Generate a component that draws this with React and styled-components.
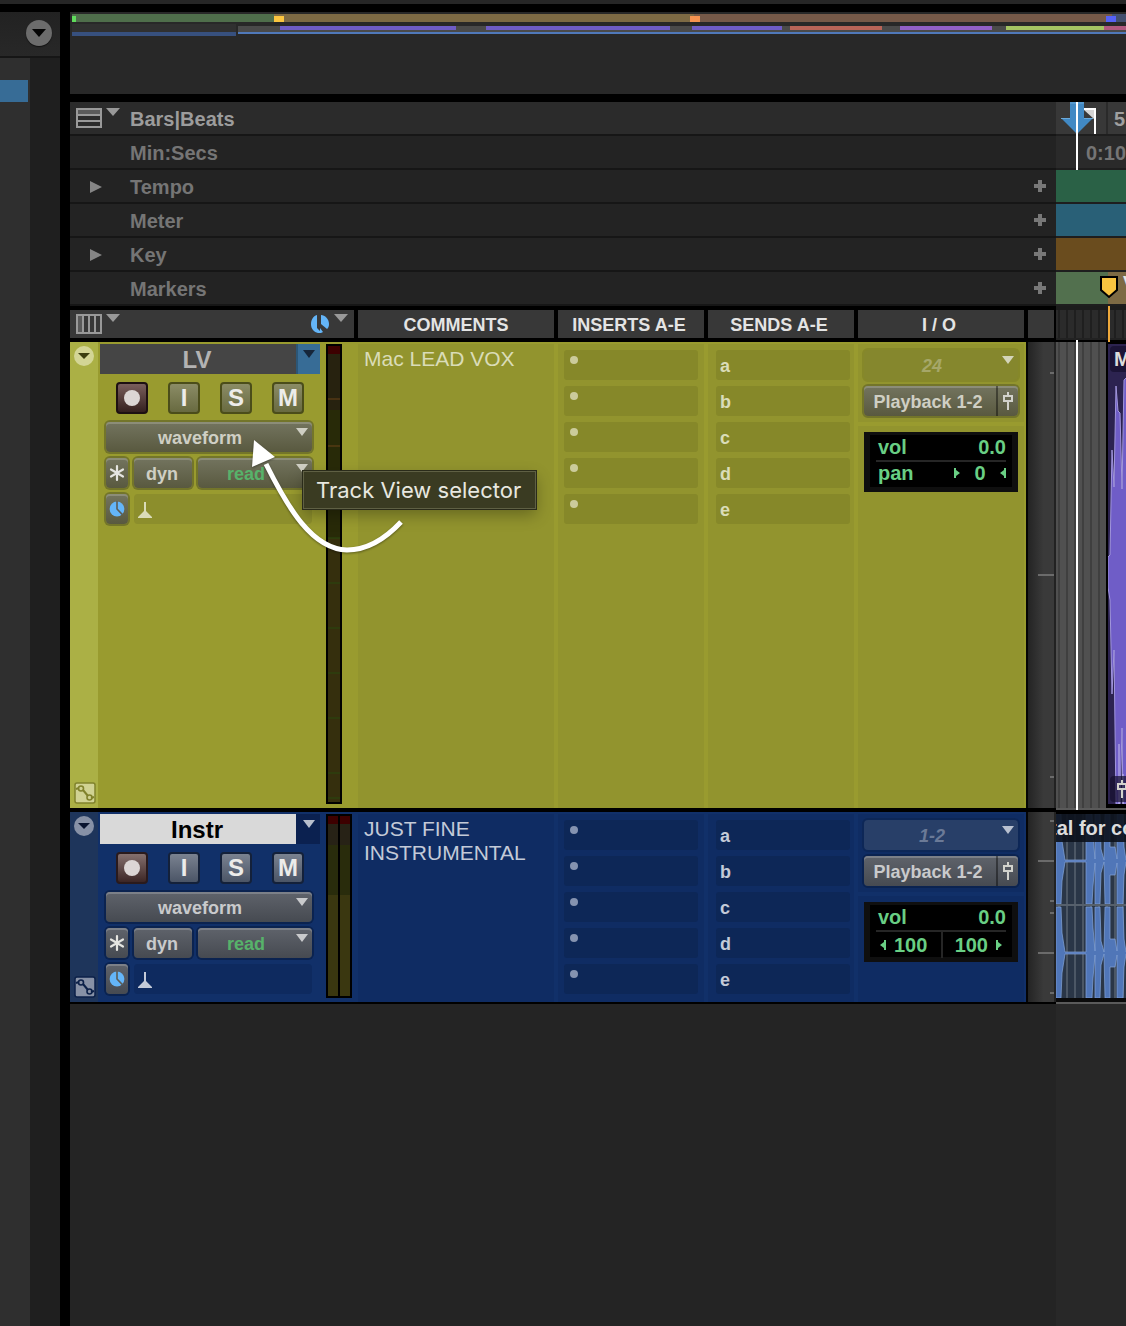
import React, { useState } from 'react'
import styled, { createGlobalStyle, ThemeProvider } from 'styled-components'

const olive = {
    base: '#999b2f', panel: '#92942e', slot: '#868829', strip: '#abb045',
    ring: '#73752a', btnTop: '#73745f', btnBottom: '#59593f', btnEdge: '#8c8d78',
    keyTop: '#8b8c66', keyBottom: '#686a40', keyEdge: '#4b4d1a', recTop: '#7a5f5c', recBottom: '#35201f', recEdge: '#1d1012',
    text: '#cfcfc4', soft: '#dadcb8', dot: '#cbcb9b',
    nameBg: '#454545', nameText: '#b3b3b3', dropBg: '#376c96', dropEdge: '#2c5676', dropArrow: '#16263a',
    fold: '#d3d595', foldArrow: '#3c3e10', inputBg: '#85872d', inputText: '#a6a769', arrow: '#d4d5ba', link: '#80822c', linkBg: '#d0d293',
}

const navy = {
    base: '#113069', panel: '#0f2c63', slot: '#0d2757', strip: '#1e355b',
    ring: '#0b2350', btnTop: '#5f636b', btnBottom: '#464a51', btnEdge: '#7c8088',
    keyTop: '#7a8290', keyBottom: '#4b5566', keyEdge: '#14213a', recTop: '#85706e', recBottom: '#3c2625', recEdge: '#2a1a1c',
    text: '#c9cacc', soft: '#c3cad8', dot: '#8593b0',
    nameBg: '#d9d9d9', nameText: '#000', dropBg: '#0b2150', dropEdge: '#0b2150', dropArrow: '#b8bfcc',
    fold: '#8791a6', foldArrow: '#0a1530', inputBg: '#283f68', inputText: '#6b7a97', arrow: '#b9c1d0', link: '#0c2149', linkBg: '#8791a6',
}

const rulers = [
    { name: 'Bars|Beats', main: true, bg: '#383838' },
    { name: 'Min:Secs', bg: '#2a2a2a' },
    { name: 'Tempo', fold: true, add: true, bg: '#2a6146' },
    { name: 'Meter', add: true, bg: '#296077' },
    { name: 'Key', fold: true, add: true, bg: '#6a4c1e' },
    { name: 'Markers', add: true, bg: '#7d6a44' },
]

const sends = ['a', 'b', 'c', 'd', 'e']

const Arrow = ({ color = '#999', w = 12, h = 8 }) => (
    <svg width={w} height={h} viewBox="0 0 12 8" preserveAspectRatio="none"><path d="M0 0H12L6 8Z" fill={color} /></svg>
)

const ClockIcon = ({ size = 16, line = '#5b5c56' }) => (
    <svg width={size} height={size} viewBox="0 0 16 16">
        <circle cx="8" cy="8" r="7.4" fill="#64b5f8" />
        <path d="M8 0V8L13.4 13.6" fill="none" stroke={line} strokeWidth="1.6" />
    </svg>
)

const SplitClock = () => (
    <svg width="20" height="20" viewBox="0 0 20 20">
        <path d="M7 1C3 2 1 6 1 10C1 15 4 18 8 19C10 19 12 19 13 18L10 14V17L7 14Z" fill="#64b5f8" />
        <path d="M11 1C15 1 19 5 19 10C19 13 18 14 17 15L11 10Z" fill="#64b5f8" />
    </svg>
)

const FaderIcon = () => (
    <svg width="12" height="20" viewBox="0 0 12 20" fill="none" stroke="#d2d2cc" strokeWidth="2">
        <path d="M6 1V5M6 10V19M2 5H10V10H2Z" />
    </svg>
)

const LinkIcon = ({ color, bg }) => (
    <svg width="22" height="22" viewBox="0 0 22 22" fill="none" stroke={color}>
        <rect x="1" y="1" width="20" height="20" rx="2" fill={bg} strokeWidth="1.5" />
        <path d="M2 7L5 6M9 8L14 14M17 16L20 15" strokeWidth="2" />
        <circle cx="7" cy="6.500" r="2.500" strokeWidth="1.600" />
        <circle cx="15.500" cy="15.500" r="2.500" strokeWidth="1.600" />
    </svg>
)

const ListIcon = () => (
    <svg width="26" height="20" viewBox="0 0 26 20">
        <path d="M1 1H25V7H1Z" fill="#5a5a5a" />
        <path d="M1 1H25V19H1ZM1 7H25M1 13H25" fill="none" stroke="#999" strokeWidth="2" />
    </svg>
)

const ColumnsIcon = () => (
    <svg width="26" height="20" viewBox="0 0 26 20">
        <path d="M1 1H7V19H1Z" fill="#5a5a5a" />
        <path d="M1 1H25V19H1ZM7 1V19M13 1V19M19 1V19" fill="none" stroke="#999" strokeWidth="2" />
    </svg>
)

const StarIcon = () => (
    <svg width="18" height="18" viewBox="0 0 18 18" stroke="#e4e4e0" strokeWidth="2.200" strokeLinecap="round">
        <path d="M9 2V16M3 5.500L15 12.500M15 5.500L3 12.500" />
    </svg>
)

const MetronomeIcon = ({ color }) => (
    <svg width="14" height="16" viewBox="0 0 14 16">
        <path d="M6 0H8V9L14 15V16H0V15L6 9Z" fill={color} />
    </svg>
)

const overviewBlocks = [
    [2, 2, 204, 8, '#4f6e4b'], [2, 4, 4, 6, '#5fdc5c'],
    [204, 2, 420, 8, '#7d6a44'], [204, 4, 10, 6, '#fbc540'],
    [624, 2, 418, 8, '#765948'], [620, 4, 10, 6, '#f69350'],
    [1042, 2, 14, 8, '#434f6f'], [1036, 4, 10, 6, '#5561f6'],
    [2, 12, 164, 8, '#303030'], [2, 20, 164, 4, '#37507e'],
    [168, 14, 888, 6, '#4a4a4a'], [168, 20, 888, 2, '#5079ba'],
    [210, 14, 176, 4, '#6e5cc6'], [416, 14, 184, 4, '#6e5cc6'], [622, 14, 90, 4, '#6e5cc6'],
    [720, 14, 92, 4, '#b86458'], [830, 14, 92, 4, '#9160c6'],
    [936, 14, 98, 4, '#a4c462'], [1034, 14, 22, 4, '#b0597e'],
]

const Overview = () => (
    <OverviewBox viewBox="0 0 1056 82" preserveAspectRatio="none">
        {overviewBlocks.map(([x, y, w, h, fill], ind) => <rect key={ind} x={x} y={y} width={w} height={h} fill={fill} />)}
    </OverviewBox>
)

const MonoMeter = () => (
    <svg width="16" height="460" viewBox="0 0 16 460">
        <rect width="16" height="460" fill="#000" />
        <rect x="2" y="2" width="12" height="8" fill="#3d0000" />
        <rect x="2" y="10" width="12" height="56" fill="#27220f" />
        <rect x="2" y="66" width="12" height="128" fill="#282a08" />
        <rect x="2" y="194" width="12" height="264" fill="#352f0d" />
        <path d="M2 55H14M2 102H14" stroke="#6b4318" />
        <path d="M2 194H14M2 239H14M2 284H14M2 329H14M2 374H14M2 429H14M2 454H14" stroke="#28480f" />
    </svg>
)

const StereoMeter = () => (
    <svg width="26" height="184" viewBox="0 0 26 184">
        <rect width="26" height="184" fill="#000" />
        {[2, 14].map(x => (
            <g key={x}>
                <rect x={x} y="2" width="10" height="8" fill="#3d0000" />
                <rect x={x} y="10" width="10" height="21" fill="#272216" />
                <rect x={x} y="31" width="10" height="50" fill="#292c0c" />
                <rect x={x} y="81" width="10" height="101" fill="#3a3710" />
            </g>
        ))}
    </svg>
)

const VoxWave = () => (
    <WaveSvg width="400" height="460" viewBox="0 0 400 460">
        <path
            d="M0 213L2 211L4 106L6 143L8 42L10 67L12 69L14 145L16 36L18 34L400 34V460H15L14 384L12 460H8L6 306L4 350L2 256L0 243Z"
            fill="#6f5dc7" stroke="#a196dc" strokeWidth="1"
        />
        <path d="M11 460V400M15 460V430" stroke="#c7bfee" />
    </WaveSvg>
)

const wavePart = (mid, top, bottom) =>
    `M0 ${top}H5L6 ${mid - 20}L9 ${mid - 1}H30V${top}H36L37 ${mid - 25}L39 ${mid - 2}V${top}H44L45 ${mid - 12}L48 ${mid - 1}L49 ${top}H54V${mid - 14}H59L61 ${mid - 2}V${top}H67L68 ${mid - 14}L70 ${mid - 1}H76V${top}H84L90 ${mid - 1}V${mid + 1}L84 ${bottom}H76V${mid + 1}H70L68 ${mid + 14}L67 ${bottom}H61V${mid + 2}L59 ${mid + 14}H54V${bottom}H49L48 ${mid + 1}L45 ${mid + 12}L44 ${bottom}H39V${mid + 2}L37 ${mid + 25}L36 ${bottom}H30V${mid + 1}H9L6 ${mid + 20}L5 ${bottom}H0Z`

const InstrWave = () => (
    <WaveSvg width="400" height="184" viewBox="0 0 400 184">
        <path d={wavePart(47, 0, 90)} fill="#5076b8" stroke="#84a5d8" strokeWidth="0.7" />
        <path d={wavePart(139, 93, 184)} fill="#5076b8" stroke="#84a5d8" strokeWidth="0.7" />
        <path d="M0 91H400" stroke="#56606c" strokeWidth="2" />
    </WaveSvg>
)

const Scale = ({ height, long, short }) => (
    <ScaleBox>
        <svg width="26" height={height} viewBox={`0 0 26 ${height}`} stroke="#6b6b6b" strokeWidth="2">
            {long.map(y => <path key={y} d={`M10 ${y}H26`} />)}
            {short.map(y => <path key={y} d={`M22 ${y}H26`} />)}
        </svg>
    </ScaleBox>
)

const Ruler = ({ item }) => (
    <RulerRow>
        <RulerName $main={item.main}>
            <RulerLead>
                {item.main && <IconButton aria-label="Ruler view"><ListIcon /><Arrow w={14} /></IconButton>}
                {item.fold && (
                    <FoldButton aria-label={`Expand ${item.name}`}>
                        <svg width="12" height="12" viewBox="0 0 12 12"><path d="M0 0V12L12 6Z" fill="#858585" /></svg>
                    </FoldButton>
                )}
            </RulerLead>
            <RulerLabel>{item.name}</RulerLabel>
            {item.add && (
                <AddButton aria-label={`Add ${item.name}`}>
                    <svg width="12" height="12" viewBox="0 0 12 12"><path d="M6 0V12M0 6H12" stroke="#787878" strokeWidth="4" /></svg>
                </AddButton>
            )}
        </RulerName>
        <RulerTime $bg={item.bg}>
            {item.name === 'Bars|Beats' && <BarTime>5</BarTime>}
            {item.name === 'Min:Secs' && <SecTime>0:10</SecTime>}
            {item.name === 'Markers' && (
                <>
                    <MarkerSpan />
                    <MarkerText>V</MarkerText>
                    <MarkerPin width="20" height="24" viewBox="0 0 20 24">
                        <path d="M2 2H18V15L10 22L2 15Z" fill="#f9c440" stroke="#000" strokeWidth="2" />
                    </MarkerPin>
                </>
            )}
        </RulerTime>
    </RulerRow>
)

const Track = ({ theme, name, comment, input, stereo, children, meter, scale, lane }) => {
    const [view, setView] = useState('waveform')
    const [auto, setAuto] = useState('read')

    return (
        <ThemeProvider theme={theme}>
            <TrackRow>
                <TrackPanel>
                    <Strip>
                        <FoldCircle aria-label={`${name} options`}><Arrow color={theme.foldArrow} h={6} /></FoldCircle>
                        <IconButton aria-label="Show lanes"><LinkIcon color={theme.link} bg={theme.linkBg} /></IconButton>
                    </Strip>
                    <Controls>
                        <NameRow>
                            <TrackName>{name}</TrackName>
                            <NameDrop aria-label="Playlist selector"><Arrow color={theme.dropArrow} /></NameDrop>
                        </NameRow>
                        <Keys>
                            <Key $rec aria-label="Record"><svg width="18" height="18"><circle cx="9" cy="9" r="8" fill="#dcd6d5" /></svg></Key>
                            <Key>I</Key>
                            <Key>S</Key>
                            <Key>M</Key>
                        </Keys>
                        <ControlRow>
                            <Field>
                                <Select aria-label="Track view" value={view} onChange={e => setView(e.target.value)}>
                                    <option>waveform</option>
                                </Select>
                                <FieldArrow><Arrow color={theme.text} /></FieldArrow>
                            </Field>
                        </ControlRow>
                        <ControlRow>
                            <SmallButton aria-label="Freeze"><StarIcon /></SmallButton>
                            <DynButton>dyn</DynButton>
                            <Field>
                                <Select $green aria-label="Automation mode" value={auto} onChange={e => setAuto(e.target.value)}>
                                    <option>read</option>
                                </Select>
                                <FieldArrow><Arrow color={theme.text} /></FieldArrow>
                            </Field>
                        </ControlRow>
                        <ControlRow>
                            <SmallButton aria-label="Timebase"><ClockIcon /></SmallButton>
                            <ElasticSlot><MetronomeIcon color={theme.soft} /></ElasticSlot>
                        </ControlRow>
                    </Controls>
                    <MeterBox>{meter}</MeterBox>
                    <Comments>{comment}</Comments>
                    <Slots>
                        {sends.map(el => <Slot key={el}><Dot /></Slot>)}
                    </Slots>
                    <Slots $send>
                        {sends.map(el => <SendSlot key={el}>{el}</SendSlot>)}
                    </Slots>
                    <IoColumn>
                        <IoPanel>
                            <Field $plain>
                                <Select $plain aria-label="Input" defaultValue={input}><option>{input}</option></Select>
                                <FieldArrow><Arrow color={theme.arrow} /></FieldArrow>
                            </Field>
                            <Field>
                                <Select $output aria-label="Output" defaultValue="Playback 1-2"><option>Playback 1-2</option></Select>
                                <FaderButton aria-label="Output window"><FaderIcon /></FaderButton>
                            </Field>
                        </IoPanel>
                        <IoPanel $grow>
                            <Readout>
                                <ReadRow><span>vol</span><span>0.0</span></ReadRow>
                                {stereo ? (
                                    <ReadRow>
                                        <Pan><PanArrow left />100</Pan>
                                        <Pan $right>100<PanArrow /></Pan>
                                    </ReadRow>
                                ) : (
                                    <ReadRow><span>pan</span><PanCenter><PanArrow /><span>0</span><PanArrow left /></PanCenter></ReadRow>
                                )}
                            </Readout>
                        </IoPanel>
                    </IoColumn>
                    {children}
                </TrackPanel>
                {scale}
                {lane}
            </TrackRow>
        </ThemeProvider>
    )
}

const PanArrow = ({ left }) => (
    <svg width="6" height="10" viewBox="0 0 6 10">
        <path d={left ? 'M6 0V10H4V8L0 5L4 2V0Z' : 'M0 0V10H2V8L6 5L2 2V0Z'} fill="#69cf84" />
    </svg>
)

const App = () => (
    <Page>
        <GlobalStyle />
        <TopEdge />
        <Body>
            <Sidebar>
                <SideHead>
                    <SideButton aria-label="Track list menu"><Arrow color="#050505" w={14} /></SideButton>
                </SideHead>
                <SideList><Selected /></SideList>
            </Sidebar>
            <Main>
                <Overview />
                <Rulers>
                    {rulers.map(item => <Ruler key={item.name} item={item} />)}
                    <PlayArrow width="36" height="34" viewBox="0 0 36 34">
                        <path d="M23 7H35V32" stroke="#fff" strokeWidth="2" fill="none" />
                        <path d="M24 8H34V17Z" fill="#d4d4d4" />
                        <path d="M10 0H24V16H33L17 32L1 16H10Z" fill="#4189c4" />
                        <path d="M1 16.500H10M24 16.500H33M10 1H24" stroke="#6aa9da" />
                    </PlayArrow>
                    <Playhead />
                </Rulers>
                <HeadRow>
                    <Heads>
                        <FirstHead>
                            <IconButton aria-label="Edit window view"><ColumnsIcon /><Arrow w={14} /></IconButton>
                            <IconButton aria-label="Timebase"><SplitClock /><Arrow w={14} /></IconButton>
                        </FirstHead>
                        <Head>COMMENTS</Head>
                        <Head $narrow>INSERTS A-E</Head>
                        <Head $narrow>SENDS A-E</Head>
                        <Head $narrow>I / O</Head>
                        <Head />
                    </Heads>
                    <HeadTime><OrangeLine /></HeadTime>
                </HeadRow>
                <Track
                    theme={olive}
                    name="LV"
                    comment="Mac LEAD VOX"
                    input="24"
                    meter={<MonoMeter />}
                    scale={<Scale height={466} long={[233]} short={[31, 435]} />}
                    lane={
                        <Lane>
                            <VoxClip>
                                <VoxWave />
                                <ClipTag>M</ClipTag>
                                <ClipTag $low><FaderIcon /></ClipTag>
                            </VoxClip>
                            <Playhead $lane />
                        </Lane>
                    }
                >
                    <Tooltip role="tooltip">Track View selector</Tooltip>
                    <Pointer width="160" height="120" viewBox="0 0 160 120">
                        <path d="M16 26C38 70 62 111 97 112C118 112 136 100 151 84" fill="none" stroke="#fff" strokeWidth="5" />
                        <path d="M4 2L25 19L2 29Z" fill="#fff" />
                    </Pointer>
                </Track>
                <Track
                    theme={navy}
                    name="Instr"
                    comment="JUST FINE INSTRUMENTAL"
                    input="1-2"
                    stereo
                    meter={<StereoMeter />}
                    scale={<Scale height={190} long={[49, 141]} short={[9, 89, 101, 181]} />}
                    lane={
                        <Lane>
                            <InstrClip>
                                <InstrWave />
                                <ClipTitle>tal for co</ClipTitle>
                            </InstrClip>
                        </Lane>
                    }
                />
                <Rest><RestTime /></Rest>
            </Main>
        </Body>
    </Page>
)

export default App

const GlobalStyle = createGlobalStyle`
    *{
        box-sizing:border-box;
    }
    body{
        margin:0;
        background-color:#000;
        font-family:"Liberation Sans", Arial, sans-serif;
        font-weight:700;
    }
    button, select{
        font:inherit;
        color:inherit;
        margin:0;
        padding:0;
        border:0;
        background:none;
    }
    svg{
        display:block;
        flex-shrink:0;
    }
`

const Page = styled.div`
    display:flex;
    flex-direction:column;
    min-height:100vh;
    overflow:hidden;
`

const TopEdge = styled.div`
    height:4px;
    margin-bottom:8px;
    background-color:#262626;
`

const Body = styled.div`
    flex:1;
    display:flex;
    gap:10px;
`

const Sidebar = styled.aside`
    width:60px;
    flex-shrink:0;
    display:flex;
    flex-direction:column;
    background-color:#1f1f1f;
`

const SideHead = styled.div`
    height:46px;
    display:flex;
    justify-content:flex-end;
    padding:8px 8px 0 0;
    background:linear-gradient(#222, #282828);
    border-bottom:2px solid #161616;
`

const SideButton = styled.button`
    width:26px;
    height:26px;
    border-radius:50%;
    display:flex;
    align-items:center;
    justify-content:center;
    background-color:#6c6c6c;
    box-shadow:0 1px 1px #111;
`

const SideList = styled.div`
    flex:1;
    width:30px;
    padding-top:22px;
    background-color:#2f2f2f;
`

const Selected = styled.div`
    height:22px;
    margin-right:2px;
    background-color:#376c96;
`

const Main = styled.main`
    flex:1;
    min-width:0;
    display:flex;
    flex-direction:column;
`

const OverviewBox = styled.svg`
    width:100%;
    height:82px;
    margin-bottom:8px;
    background-color:#282828;
`

const Rulers = styled.section`
    position:relative;
    font-size:20px;
`

const RulerRow = styled.div`
    display:flex;
    height:34px;
`

const RulerName = styled.div`
    width:986px;
    flex-shrink:0;
    display:flex;
    align-items:center;
    padding-right:10px;
    background-color:${p=>p.$main ? '#2b2b2b' : '#232323'};
    color:${p=>p.$main ? '#9c9c9c' : '#757575'};
    border-bottom:2px solid #161616;
`

const RulerLead = styled.div`
    width:60px;
    height:32px;
    display:flex;
    align-items:center;
    padding-left:6px;
`

const RulerLabel = styled.span`
    padding-top:2px;
`

const IconButton = styled.button`
    display:flex;
    align-items:flex-start;
    gap:4px;
`

const FoldButton = styled.button`
    margin-left:14px;
    padding-top:2px;
`

const AddButton = styled.button`
    margin-left:auto;
`

const RulerTime = styled.div`
    position:relative;
    flex:1;
    min-width:0;
    display:flex;
    align-items:center;
    overflow:hidden;
    white-space:nowrap;
    background-color:${p=>p.$bg};
    border-bottom:2px solid #1e1e1e;
`

const BarTime = styled.span`
    height:32px;
    line-height:34px;
    margin-left:50px;
    padding-left:6px;
    border-left:2px solid #2a2a2a;
    color:#a0a0a0;
`

const SecTime = styled.span`
    margin-left:30px;
    padding-top:2px;
    color:#757575;
`

const MarkerSpan = styled.div`
    width:52px;
    height:32px;
    flex-shrink:0;
    background-color:#52704e;
`

const MarkerText = styled.span`
    margin-left:15px;
    margin-bottom:10px;
    font-size:18px;
    color:#e6e6e6;
`

const MarkerPin = styled.svg`
    position:absolute;
    left:43px;
    top:3px;
`

const PlayArrow = styled.svg`
    position:absolute;
    left:990px;
    top:0;
`

const Playhead = styled.div`
    position:absolute;
    top:${p=>p.$lane ? '-2px' : '0'};
    left:${p=>p.$lane ? '20px' : '1006px'};
    width:2px;
    height:${p=>p.$lane ? '470px' : '68px'};
    background-color:#fff;
`

const HeadRow = styled.div`
    display:flex;
    height:36px;
    flex-shrink:0;
`

const Heads = styled.div`
    width:986px;
    flex-shrink:0;
    display:grid;
    grid-template-columns:284px 196px 146px 146px 166px 26px;
    gap:4px;
    padding:4px 2px 4px 0;
`

const Head = styled.div`
    display:flex;
    align-items:center;
    justify-content:center;
    padding-top:2px;
    padding-right:${p=>p.$narrow ? '4px' : '0'};
    background-color:#383838;
    color:#e4e4e4;
    font-size:18px;
`

const FirstHead = styled(Head)`
    align-items:flex-start;
    justify-content:space-between;
    padding:4px 6px;
`

const HeadTime = styled.div`
    flex:1;
    position:relative;
    margin-bottom:2px;
    border-top:4px solid #1c1c1c;
    border-bottom:2px solid #222;
    background:repeating-linear-gradient(90deg, #2b2b2b 0 2px, #1f1f1f 2px 4px, #2b2b2b 4px 8px);
`

const OrangeLine = styled.div`
    position:absolute;
    left:52px;
    top:-4px;
    width:2px;
    height:36px;
    background-color:#efa93b;
`

const TrackRow = styled.section`
    display:flex;
    margin-bottom:4px;
    &:last-of-type{
        margin-bottom:2px;
    }
`

const TrackPanel = styled.div`
    position:relative;
    width:956px;
    min-height:190px;
    flex-shrink:0;
    display:flex;
    background-color:${p=>p.theme.base};
`

const Strip = styled.div`
    width:28px;
    display:flex;
    flex-direction:column;
    justify-content:space-between;
    padding:4px;
    background-color:${p=>p.theme.strip};
`

const FoldCircle = styled.button`
    width:20px;
    height:20px;
    border-radius:50%;
    display:flex;
    align-items:center;
    justify-content:center;
    background-color:${p=>p.theme.fold};
`

const Controls = styled.div`
    width:228px;
    padding:2px 6px 0 2px;
`

const NameRow = styled.div`
    display:flex;
    height:30px;
`

const TrackName = styled.button`
    flex:1;
    padding:2px 2px 0 0;
    font-size:24px;
    background-color:${p=>p.theme.nameBg};
    color:${p=>p.theme.nameText};
`

const NameDrop = styled.button`
    width:24px;
    display:flex;
    justify-content:center;
    padding-top:6px;
    background-color:${p=>p.theme.dropBg};
    border-left:2px solid ${p=>p.theme.dropEdge};
`

const Keys = styled.div`
    display:flex;
    justify-content:space-between;
    padding:8px 16px;
`

const Key = styled.button`
    width:32px;
    height:32px;
    display:flex;
    align-items:center;
    justify-content:center;
    border:2px solid ${p=>p.$rec ? p.theme.recEdge : p.theme.keyEdge};
    border-radius:4px;
    background:${p=>p.$rec
        ? `linear-gradient(${p.theme.recTop}, ${p.theme.recBottom})`
        : `linear-gradient(${p.theme.keyTop}, ${p.theme.keyBottom})`};
    color:#ececea;
    font-size:24px;
    line-height:28px;
`

const ControlRow = styled.div`
    display:flex;
    gap:6px;
    height:30px;
    margin:0 8px 6px 6px;
    font-size:18px;
    color:${p=>p.theme.text};
`

const Field = styled.div`
    position:relative;
    flex:1;
    display:flex;
    height:30px;
    border-radius:4px;
    background:${p=>p.$plain ? p.theme.inputBg : `linear-gradient(${p.theme.btnTop}, ${p.theme.btnBottom})`};
    box-shadow:0 0 0 2px ${p=>p.$plain ? p.theme.slot : p.theme.ring}${p=>p.$plain ? '' : `, inset 0 2px 0 ${p.theme.btnEdge}`};
`

const Select = styled.select`
    appearance:none;
    flex:1;
    min-width:0;
    padding:2px ${p=>p.$output ? '4px' : '18px'} 0 0;
    text-align:center;
    text-align-last:center;
    color:${p=>p.$green ? '#57b26a' : p.$plain ? p.theme.inputText : p.theme.text};
    font-style:${p=>p.$plain ? 'italic' : 'normal'};
`

const FieldArrow = styled.span`
    position:absolute;
    right:4px;
    top:6px;
    pointer-events:none;
`

const SmallButton = styled.button`
    width:22px;
    height:30px;
    display:flex;
    align-items:center;
    justify-content:center;
    border-radius:4px;
    background:linear-gradient(${p=>p.theme.btnTop}, ${p=>p.theme.btnBottom});
    box-shadow:0 0 0 2px ${p=>p.theme.ring}, inset 0 2px 0 ${p=>p.theme.btnEdge};
`

const DynButton = styled(SmallButton)`
    width:58px;
    padding:2px 2px 0 0;
`

const ElasticSlot = styled.div`
    flex:1;
    display:flex;
    align-items:center;
    padding:2px 4px 0;
    border-radius:4px;
    background-color:${p=>p.theme.panel};
    box-shadow:inset 0 0 0 30px rgba(0,0,0,0.04);
`

const MeterBox = styled.div`
    width:32px;
    padding-top:2px;
    padding-bottom:4px;
`

const Comments = styled.div`
    width:196px;
    margin:2px 4px 0 0;
    padding:3px 6px;
    background-color:${p=>p.theme.panel};
    color:${p=>p.theme.soft};
    font-size:21px;
    font-weight:400;
    line-height:24px;
`

const Slots = styled.div`
    width:146px;
    display:flex;
    flex-direction:column;
    gap:6px;
    margin:2px 4px 0 0;
    padding:${p=>p.$send ? '6px 4px 0 8px' : '6px 6px 0 6px'};
    background-color:${p=>p.theme.panel};
`

const Slot = styled.div`
    height:30px;
    padding:6px;
    border-radius:3px;
    background-color:${p=>p.theme.slot};
`

const SendSlot = styled(Slot)`
    padding:0 4px;
    line-height:32px;
    font-size:18px;
    color:${p=>p.theme.soft};
`

const Dot = styled.div`
    width:8px;
    height:8px;
    border-radius:50%;
    background-color:${p=>p.theme.dot};
`

const IoColumn = styled.div`
    width:166px;
    display:flex;
    flex-direction:column;
    gap:4px;
    padding-top:2px;
    font-size:18px;
`

const IoPanel = styled.div`
    flex:${p=>p.$grow ? 1 : 'none'};
    display:flex;
    flex-direction:column;
    gap:6px;
    padding:6px;
    background-color:${p=>p.theme.panel};
    ${Field}{
        flex:none;
    }
`

const FaderButton = styled.button`
    width:22px;
    display:flex;
    align-items:center;
    justify-content:center;
    border-left:2px solid rgba(0,0,0,0.4);
`

const Readout = styled.div`
    height:60px;
    padding:1px 6px;
    border:6px solid #0f0f0f;
    border-top-width:3px;
    border-bottom-width:5px;
    background-color:#000;
    color:#69cf84;
    font-size:20px;
`

const ReadRow = styled.div`
    display:flex;
    justify-content:space-between;
    height:24px;
    line-height:22px;
    padding-left:2px;
    & + &{
        border-top:2px solid #262626;
    }
`

const Pan = styled.div`
    flex:1;
    display:flex;
    align-items:center;
    gap:8px;
    justify-content:${p=>p.$right ? 'flex-end' : 'flex-start'};
    height:26px;
    padding:0 4px 0 2px;
    border-left:${p=>p.$right ? '2px solid #262626' : '0'};
`

const PanCenter = styled.div`
    width:52px;
    display:flex;
    align-items:center;
    justify-content:space-between;
`

const ScaleBox = styled.div`
    width:30px;
    flex-shrink:0;
    border-left:2px solid #050505;
    border-right:2px solid #222;
    background:linear-gradient(90deg, #242424, #3a3a3a 60%);
`

const Lane = styled.div`
    position:relative;
    flex:1;
    min-width:0;
    display:flex;
    box-shadow:0 2px 0 #5a5a5a;
    background:repeating-linear-gradient(90deg, #505050 0 2px, #3f3f3f 2px 4px, #505050 4px 8px);
`

const WaveSvg = styled.svg`
    position:absolute;
    left:0;
    top:0;
`

const VoxClip = styled.div`
    position:relative;
    flex:1;
    display:flex;
    flex-direction:column;
    justify-content:space-between;
    align-items:flex-start;
    margin-left:50px;
    padding:2px;
    overflow:hidden;
    border:2px solid #000;
    border-right:0;
    border-bottom-width:4px;
    background-color:#2c2350;
`

const ClipTag = styled.div`
    position:relative;
    height:26px;
    line-height:24px;
    padding:0 ${p=>p.$low ? '6px' : '4px'};
    display:flex;
    align-items:center;
    border-radius:4px;
    background-color:rgba(20,14,44,0.7);
    color:#dcdcdc;
    font-size:20px;
`

const InstrClip = styled.div`
    position:relative;
    flex:1;
    min-width:0;
    height:190px;
    overflow:hidden;
    border-top:2px solid #000;
    border-bottom:4px solid #0a0a0a;
    background:repeating-linear-gradient(90deg, #2a3647 0 2px, #4c5765 2px 4px, #2a3647 4px 8px);
`

const ClipTitle = styled.div`
    position:relative;
    height:28px;
    line-height:28px;
    text-indent:-6px;
    white-space:nowrap;
    background-color:rgba(12,18,28,0.9);
    color:#dcdcdc;
    font-size:20px;
`

const Rest = styled.div`
    flex:1;
    display:flex;
    background-color:#242424;
`

const RestTime = styled.div`
    flex:1;
    margin-left:986px;
    background-color:#282828;
`

const Tooltip = styled.div`
    position:absolute;
    left:233px;
    top:129px;
    z-index:2;
    height:38px;
    line-height:36px;
    padding:0 14px 0 12px;
    border:1px solid #5f6044;
    outline:1px solid #2a2b1a;
    background-color:#3a3b22;
    box-shadow:0 6px 16px rgba(0,0,0,0.3);
    color:#e8e8e0;
    font-family:Inter, sans-serif;
    font-size:22px;
    font-weight:400;
    white-space:nowrap;
`

const Pointer = styled.svg`
    position:absolute;
    left:180px;
    top:96px;
    z-index:3;
    filter:drop-shadow(0 1px 1px rgba(0,0,0,0.4));
`
